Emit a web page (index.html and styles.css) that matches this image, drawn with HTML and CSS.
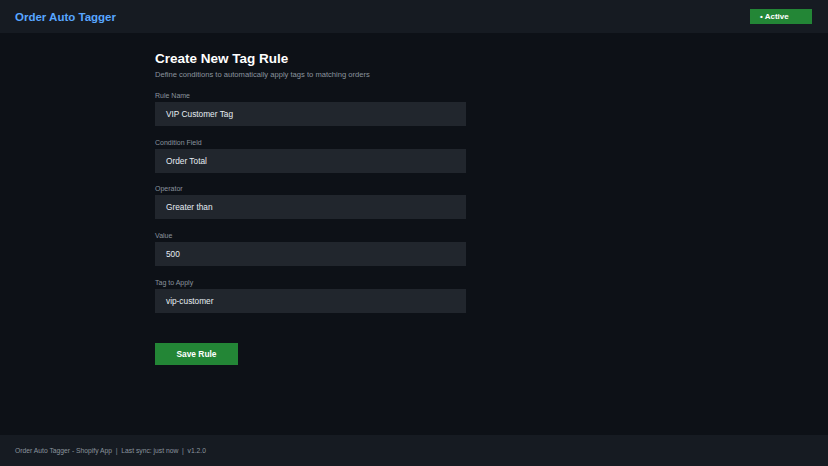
FILE: index.html
```html
<!DOCTYPE html>
<html>
<head>
<meta charset="utf-8">
<link rel="stylesheet" href="styles.css">
</head>
<body>
<div class="app">
  <header class="topbar">
    <div class="brand">Order Auto Tagger</div>
    <div class="badge">• Active</div>
  </header>
  <main class="main">
    <div class="form">
      <h1 class="title">Create New Tag Rule</h1>
      <p class="subtitle">Define conditions to automatically apply tags to matching orders</p>
      <div class="field">
        <label class="label">Rule Name</label>
        <div class="input">VIP Customer Tag</div>
      </div>
      <div class="field">
        <label class="label">Condition Field</label>
        <div class="input">Order Total</div>
      </div>
      <div class="field">
        <label class="label">Operator</label>
        <div class="input">Greater than</div>
      </div>
      <div class="field">
        <label class="label">Value</label>
        <div class="input">500</div>
      </div>
      <div class="field">
        <label class="label">Tag to Apply</label>
        <div class="input">vip-customer</div>
      </div>
      <button class="save">Save Rule</button>
    </div>
  </main>
  <footer class="footer">Order Auto Tagger - Shopify App &nbsp;|&nbsp; Last sync: just now &nbsp;|&nbsp; v1.2.0</footer>
</div>
</body>
</html>
```
FILE: styles.css
```css
* { box-sizing: border-box; }
html, body { margin: 0; padding: 0; }
body {
  background: #0d1117;
  font-family: "Liberation Sans", Arial, sans-serif;
  color: #e6edf3;
}
.app {
  width: 828px;
  height: 466px;
  display: flex;
  flex-direction: column;
}
.topbar {
  height: 33px;
  background: #161b22;
  display: flex;
  align-items: center;
  justify-content: space-between;
  padding: 0 16px 0 15px;
}
.brand {
  color: #58a6ff;
  font-weight: bold;
  font-size: 11.5px;
}
.badge {
  background: #238636;
  color: #ffffff;
  font-weight: bold;
  font-size: 8px;
  width: 62px;
  height: 15px;
  line-height: 15px;
  padding-left: 10px;
}
.main {
  flex: 1;
  padding: 0 0 0 155px;
}
.form {
  width: 311px;
  display: flex;
  flex-direction: column;
}
.title {
  margin: 17px 0 0;
  font-size: 13.5px;
  font-weight: bold;
  color: #ffffff;
  line-height: 17px;
}
.subtitle {
  margin: 3px 0 0;
  font-size: 7.6px;
  color: #8b949e;
  line-height: 10px;
}
.field {
  display: flex;
  flex-direction: column;
  margin-top: 11px;
}
.field + .field { margin-top: 11.7px; }
.label {
  font-size: 7px;
  color: #8b949e;
  line-height: 9px;
  margin-bottom: 2px;
}
.input {
  height: 24px;
  background: #21262d;
  color: #e6edf3;
  font-size: 8.3px;
  line-height: 24px;
  padding-left: 11px;
}
.save {
  margin-top: 30px;
  width: 83px;
  height: 22px;
  background: #238636;
  border: 0;
  color: #ffffff;
  font-family: "Liberation Sans", Arial, sans-serif;
  font-weight: bold;
  font-size: 8.4px;
  padding: 0;
}
.footer {
  height: 31px;
  background: #161b22;
  color: #8b949e;
  font-size: 6.75px;
  line-height: 31px;
  padding-left: 15px;
}
```
